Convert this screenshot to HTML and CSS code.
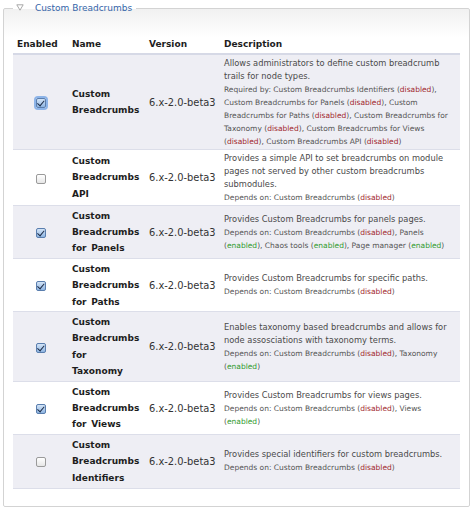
FILE: index.html
```html
<!DOCTYPE html>
<html lang="en">
<head>
  <meta charset="UTF-8">
  <meta name="viewport" content="width=device-width, initial-scale=1">
  <title>Modules - Custom Breadcrumbs</title>
  <link rel="stylesheet" href="styles.css">
</head>
<body>
  <fieldset class="package">
    <legend>
      <svg class="toggle" width="8" height="7" viewBox="0 0 8 7"><path d="M0.8 0.8 H7.2 L4 6.2 Z" fill="none" stroke="#a9a9a9" stroke-width="1"/></svg>
      <span>Custom Breadcrumbs</span>
    </legend>

    <table class="modules">
      <thead>
        <tr>
          <th class="col-enabled">Enabled</th>
          <th class="col-name">Name</th>
          <th class="col-version">Version</th>
          <th>Description</th>
        </tr>
      </thead>
      <tbody>
        <!-- custom_breadcrumbs -->
        <tr class="even">
          <td class="checkbox"><span class="box checked focus"></span></td>
          <td class="name">Custom Breadcrumbs</td>
          <td class="version">6.x-2.0-beta3</td>
          <td class="description">
            Allows administrators to define custom breadcrumb trails for node types.
            <div class="deps">Required by: Custom Breadcrumbs Identifiers (<span class="off">disabled</span>), Custom Breadcrumbs for Panels (<span class="off">disabled</span>), Custom Breadcrumbs for Paths (<span class="off">disabled</span>), Custom Breadcrumbs for Taxonomy (<span class="off">disabled</span>), Custom Breadcrumbs for Views (<span class="off">disabled</span>), Custom Breadcrumbs API (<span class="off">disabled</span>)</div>
          </td>
        </tr>

        <!-- custom_breadcrumbs_api -->
        <tr class="odd">
          <td class="checkbox"><span class="box"></span></td>
          <td class="name">Custom Breadcrumbs API</td>
          <td class="version">6.x-2.0-beta3</td>
          <td class="description">
            Provides a simple API to set breadcrumbs on module pages not served by other custom breadcrumbs submodules.
            <div class="deps">Depends on: Custom Breadcrumbs (<span class="off">disabled</span>)</div>
          </td>
        </tr>

        <!-- custom_breadcrumbs_panels -->
        <tr class="even">
          <td class="checkbox"><span class="box checked"></span></td>
          <td class="name">Custom Breadcrumbs for Panels</td>
          <td class="version">6.x-2.0-beta3</td>
          <td class="description">
            Provides Custom Breadcrumbs for panels pages.
            <div class="deps">Depends on: Custom Breadcrumbs (<span class="off">disabled</span>), Panels (<span class="on">enabled</span>), Chaos tools (<span class="on">enabled</span>), Page manager (<span class="on">enabled</span>)</div>
          </td>
        </tr>

        <!-- custom_breadcrumbs_paths -->
        <tr class="odd">
          <td class="checkbox"><span class="box checked"></span></td>
          <td class="name">Custom Breadcrumbs for Paths</td>
          <td class="version">6.x-2.0-beta3</td>
          <td class="description">
            Provides Custom Breadcrumbs for specific paths.
            <div class="deps">Depends on: Custom Breadcrumbs (<span class="off">disabled</span>)</div>
          </td>
        </tr>

        <!-- custom_breadcrumbs_taxonomy -->
        <tr class="even">
          <td class="checkbox"><span class="box checked"></span></td>
          <td class="name">Custom Breadcrumbs for Taxonomy</td>
          <td class="version">6.x-2.0-beta3</td>
          <td class="description">
            Enables taxonomy based breadcrumbs and allows for node assosciations with taxonomy terms.
            <div class="deps">Depends on: Custom Breadcrumbs (<span class="off">disabled</span>), Taxonomy (<span class="on">enabled</span>)</div>
          </td>
        </tr>

        <!-- custom_breadcrumbs_views -->
        <tr class="odd">
          <td class="checkbox"><span class="box checked"></span></td>
          <td class="name">Custom Breadcrumbs for Views</td>
          <td class="version">6.x-2.0-beta3</td>
          <td class="description">
            Provides Custom Breadcrumbs for views pages.
            <div class="deps">Depends on: Custom Breadcrumbs (<span class="off">disabled</span>), Views (<span class="on">enabled</span>)</div>
          </td>
        </tr>

        <!-- custom_breadcrumbs_identifiers -->
        <tr class="even">
          <td class="checkbox"><span class="box"></span></td>
          <td class="name">Custom Breadcrumbs Identifiers</td>
          <td class="version">6.x-2.0-beta3</td>
          <td class="description">
            Provides special identifiers for custom breadcrumbs.
            <div class="deps">Depends on: Custom Breadcrumbs (<span class="off">disabled</span>)</div>
          </td>
        </tr>
      </tbody>
    </table>
  </fieldset>
</body>
</html>
```

FILE: styles.css
```css
* {
  box-sizing: border-box;
}

body {
  font-family: 'DejaVu Sans', Verdana, sans-serif;
  background: #fff;
  color: #222;
  margin: 0;
  padding: 0;
}

.package {
  margin: 0 4px 0 3px;
  padding: 20px 9px 17px 9px;
  border: 1px solid #d3d3d3;
  border-radius: 2px;
  background: linear-gradient(#f1f1f1, #fff 28px);
}

.package legend {
  padding: 0 4px 0 3px;
  font-size: 9px;
  line-height: 16px;
  color: #3465a8;
}

.toggle {
  vertical-align: 0;
  margin-right: 8px;
}

.modules {
  width: 100%;
  border-collapse: collapse;
  table-layout: fixed;
}

.modules th {
  text-align: left;
  font-size: 9px;
  font-weight: bold;
  color: #1d1d1d;
  padding: 3px 4px 4px;
  border-bottom: 2px solid #d6d9e6;
}

.col-enabled {
  width: 55px;
}

.col-name {
  width: 77px;
}

.col-version {
  width: 75px;
}

.modules td {
  padding: 1.5px 4px;
  vertical-align: middle;
  border-bottom: 1px solid #dcdee9;
}

.modules tr.even td {
  background: #eeeef4;
}

.modules tr.odd td {
  background: #fff;
}

td.checkbox {
  text-align: center;
}

td.name {
  font-size: 9px;
  font-weight: bold;
  line-height: 16.4px;
  word-spacing: 1.5px;
  color: #1d1d1d;
}

td.version {
  font-size: 9.9px;
  color: #333;
  white-space: nowrap;
}

td.description {
  font-size: 8.3px;
  line-height: 13px;
  color: #4a4a4a;
}

.deps {
  font-size: 7.5px;
  color: #555;
}

.off {
  color: #a1262c;
}

.on {
  color: #2f9a2c;
}

.box {
  display: inline-block;
  width: 10px;
  height: 10px;
  border: 1px solid #9a9a9a;
  border-radius: 2px;
  background: linear-gradient(#fff, #e6e6e6);
  vertical-align: middle;
  position: relative;
}

.box.checked {
  border-color: #5a7eae;
  background: linear-gradient(#d3e4f7, #8fb5e2);
}

.box.checked::after {
  content: "";
  position: absolute;
  left: 2.5px;
  top: 0px;
  width: 3px;
  height: 5.5px;
  border: solid #1b2a45;
  border-width: 0 1.6px 1.6px 0;
  transform: rotate(40deg);
}

.box.focus {
  box-shadow: 0 0 0 2px #8db4e8;
}
```
